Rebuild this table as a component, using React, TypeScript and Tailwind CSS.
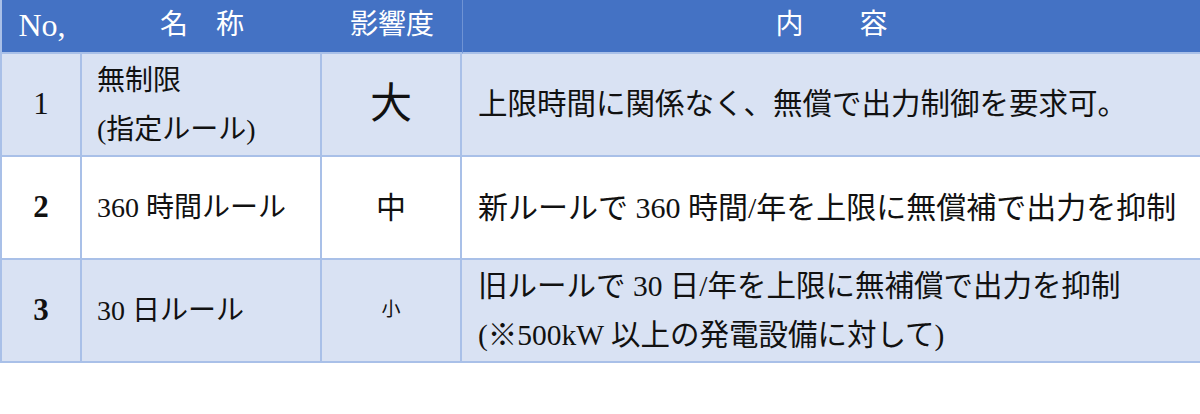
const font = "font-['Liberation_Serif','Noto_Sans_CJK_JP',serif]"

type Row = {
  no: string
  name: string[]
  impact: string
  impactClass: string
  content: string[]
  contentClass: string
  striped: boolean
}

const rows: Row[] = [
  {
    no: "1",
    name: ["無制限", "(指定ルール)"],
    impact: "大",
    impactClass: "text-[42px]",
    content: ["上限時間に関係なく、無償で出力制御を要求可。"],
    contentClass: "text-[29.5px]",
    striped: true,
  },
  {
    no: "2",
    name: ["360 時間ルール"],
    impact: "中",
    impactClass: "text-[30px]",
    content: ["新ルールで 360 時間/年を上限に無償補で出力を抑制"],
    contentClass: "text-[30px]",
    striped: false,
  },
  {
    no: "3",
    name: ["30 日ルール"],
    impact: "小",
    impactClass: "text-[19px]",
    content: [
      "旧ルールで 30 日/年を上限に無補償で出力を抑制",
      "(※500kW 以上の発電設備に対して)",
    ],
    contentClass: "text-[29.5px]",
    striped: true,
  },
]

export default function App() {
  return (
    <div className={`h-[414px] w-[1200px] bg-white ${font} text-[#111]`}>
      <div className="grid grid-cols-[80px_240px_140px_1fr] border-l-2 border-[#A9C0E8]">
        <div className="flex h-[54px] items-center justify-center border-b-2 border-[#A9C0E8] bg-[#4472C4] pb-[2px] text-[32px] text-white">
          No,
        </div>
        <div className="flex h-[54px] items-center justify-center border-b-2 border-[#A9C0E8] bg-[#4472C4] pb-[2px] text-[28px] text-white">
          名　称
        </div>
        <div className="flex h-[54px] items-center justify-center border-b-2 border-[#A9C0E8] bg-[#4472C4] pb-[2px] text-[28px] text-white">
          影響度
        </div>
        <div className="flex h-[54px] items-center justify-center border-b-2 border-l border-[#A9C0E8] border-l-[#6F93D4] bg-[#4472C4] pb-[2px] text-[28px] text-white">
          内　　容
        </div>

        {rows.map((row) => {
          const bg = row.striped ? "bg-[#D9E2F3]" : "bg-white"
          const cell = `h-[103px] border-b-2 border-[#A9C0E8] ${bg}`
          return [
            <div
              key={`${row.no}-no`}
              className={`${cell} flex items-center justify-center border-r-2 text-[31px] ${row.no === "1" ? "" : "font-bold"}`}
            >
              {row.no}
            </div>,
            <div
              key={`${row.no}-name`}
              className={`${cell} flex flex-col justify-center border-r-2 pl-[15px] text-[28px] leading-[49px]`}
            >
              {row.name.map((line) => (
                <span key={line} className="whitespace-nowrap">
                  {line}
                </span>
              ))}
            </div>,
            <div
              key={`${row.no}-impact`}
              className={`${cell} flex items-center justify-center border-r-2 ${row.impactClass}`}
            >
              {row.impact}
            </div>,
            <div
              key={`${row.no}-content`}
              className={`${cell} flex flex-col justify-center pl-[16px] leading-[49px] ${row.contentClass}`}
            >
              {row.content.map((line) => (
                <span key={line} className="whitespace-nowrap">
                  {line}
                </span>
              ))}
            </div>,
          ]
        })}
      </div>
    </div>
  )
}
